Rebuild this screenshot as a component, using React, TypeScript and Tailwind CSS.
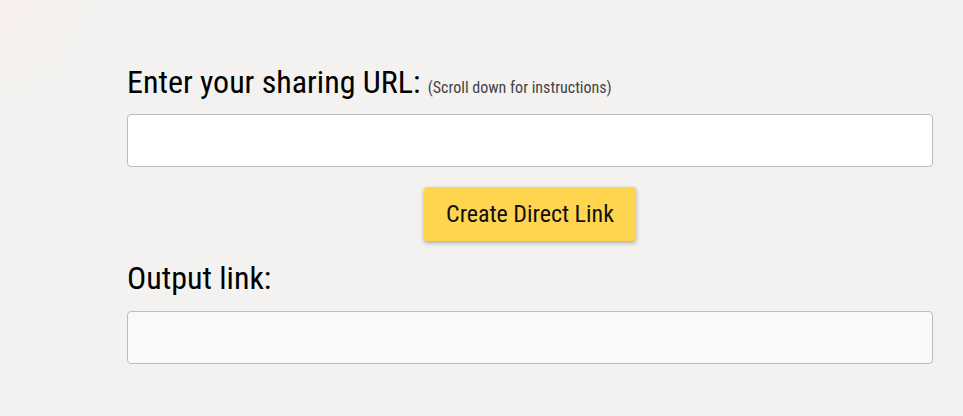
import { useState } from 'react'

export default function App() {
  const [url, setUrl] = useState('')
  const [output, setOutput] = useState('')

  const handleCreate = () => {
    setOutput(url)
  }

  return (
    <div className="min-h-[416px] w-full bg-[#f3f2f0] bg-[radial-gradient(circle_at_0%_0%,#f8efec_0,#f3f2f0_90px)] font-['Roboto',sans-serif] [font-stretch:condensed] text-black">
      <div className="ml-[127px] mr-[30px] pt-[62px]">
        <h2 className="text-[32px] leading-[40px]">
          Enter your sharing URL:{' '}
          <span className="text-[16px] text-[#444]">(Scroll down for instructions)</span>
        </h2>
        <input
          type="text"
          value={url}
          onChange={(e) => setUrl(e.target.value)}
          className="mt-[6px] block h-[53px] w-full rounded-[4px] border border-[#bdbdbd] bg-white px-3 text-lg outline-none"
        />
        <div className="mt-[20px] flex justify-center">
          <button
            onClick={handleCreate}
            className="h-[54px] w-[212px] rounded-[3px] bg-[#ffd54f] text-[24px] text-[#111] shadow-[0_2px_4px_rgba(0,0,0,0.3)]"
          >
            Create Direct Link
          </button>
        </div>
        <h2 className="mt-[17px] text-[32px] leading-[40px]">Output link:</h2>
        <input
          type="text"
          readOnly
          value={output}
          className="mt-[13px] block h-[53px] w-full rounded-[4px] border border-[#bdbdbd] bg-[#faf9f7] px-3 text-lg outline-none"
        />
      </div>
    </div>
  )
}
